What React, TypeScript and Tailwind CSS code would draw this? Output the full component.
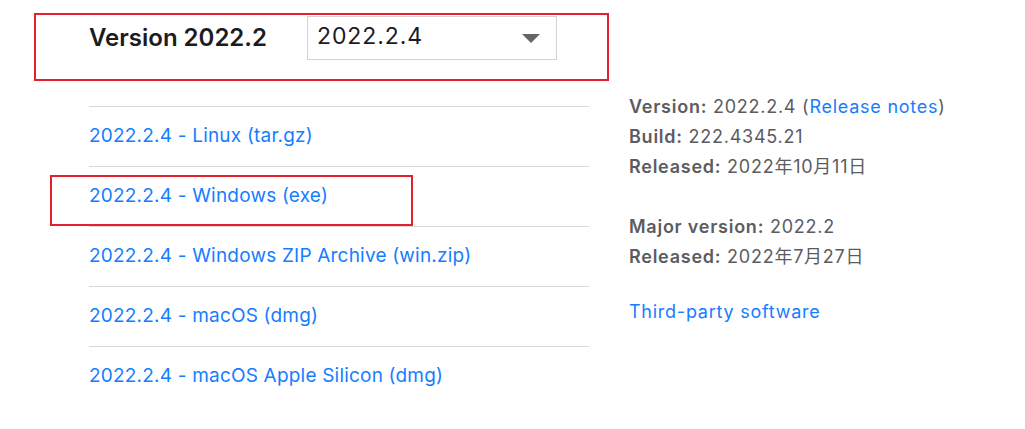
import React from "react";

const links = [
  "2022.2.4 - Linux (tar.gz)",
  "2022.2.4 - Windows (exe)",
  "2022.2.4 - Windows ZIP Archive (win.zip)",
  "2022.2.4 - macOS (dmg)",
  "2022.2.4 - macOS Apple Silicon (dmg)",
];

export default function App() {
  return (
    <div
      className="relative w-[1025px] h-[429px] bg-white overflow-hidden"
      style={{ fontFamily: "Inter, 'Noto Sans CJK SC', sans-serif" }}
    >
      <div className="pl-[89px] pt-[16px]">
        <div className="flex items-center h-[44px]">
          <div className="w-[218px] text-[24px] font-semibold text-[#1c1c1f] leading-none">
            Version 2022.2
          </div>
          <div className="w-[250px] h-[44px] border border-[#d4d4d4] flex items-center justify-between pl-[9px] pr-[16px]">
            <span className="text-[23px] tracking-[0.9px] text-[#1c1c1f] -mt-[3px]">2022.2.4</span>
            <svg width="18" height="10" viewBox="0 0 18 10" className="mt-[1px]">
              <polygon points="0,0 18,0 9,9" fill="#666666" />
            </svg>
          </div>
        </div>
        <div className="flex mt-[46px]">
          <div className="w-[500px]">
            {links.map((l) => (
              <div
                key={l}
                className="h-[60px] border-t border-[#d9d9d9] flex items-center"
              >
                <a className="text-[19px] tracking-[0.2px] text-[#167dff]">{l}</a>
              </div>
            ))}
          </div>
          <div className="ml-[40px] -mt-[14px] text-[18px] tracking-[0.75px] leading-[30px] text-[#5b5c5f]">
            <div>
              <span className="font-semibold">Version:</span> 2022.2.4 (
              <span className="text-[#167dff]">Release notes</span>)
            </div>
            <div>
              <span className="font-semibold">Build:</span> 222.4345.21
            </div>
            <div>
              <span className="font-semibold">Released:</span> 2022年10月11日
            </div>
            <div className="mt-[30px]">
              <span className="font-semibold">Major version:</span> 2022.2
            </div>
            <div>
              <span className="font-semibold">Released:</span> 2022年7月27日
            </div>
            <div className="mt-[25px] text-[#167dff]">Third-party software</div>
          </div>
        </div>
      </div>
      <div className="absolute left-[34px] top-[13px] w-[575px] h-[68px] border-2 border-[#e5202e]" />
      <div className="absolute left-[50px] top-[175px] w-[363px] h-[51px] border-2 border-[#e5202e]" />
    </div>
  );
}
